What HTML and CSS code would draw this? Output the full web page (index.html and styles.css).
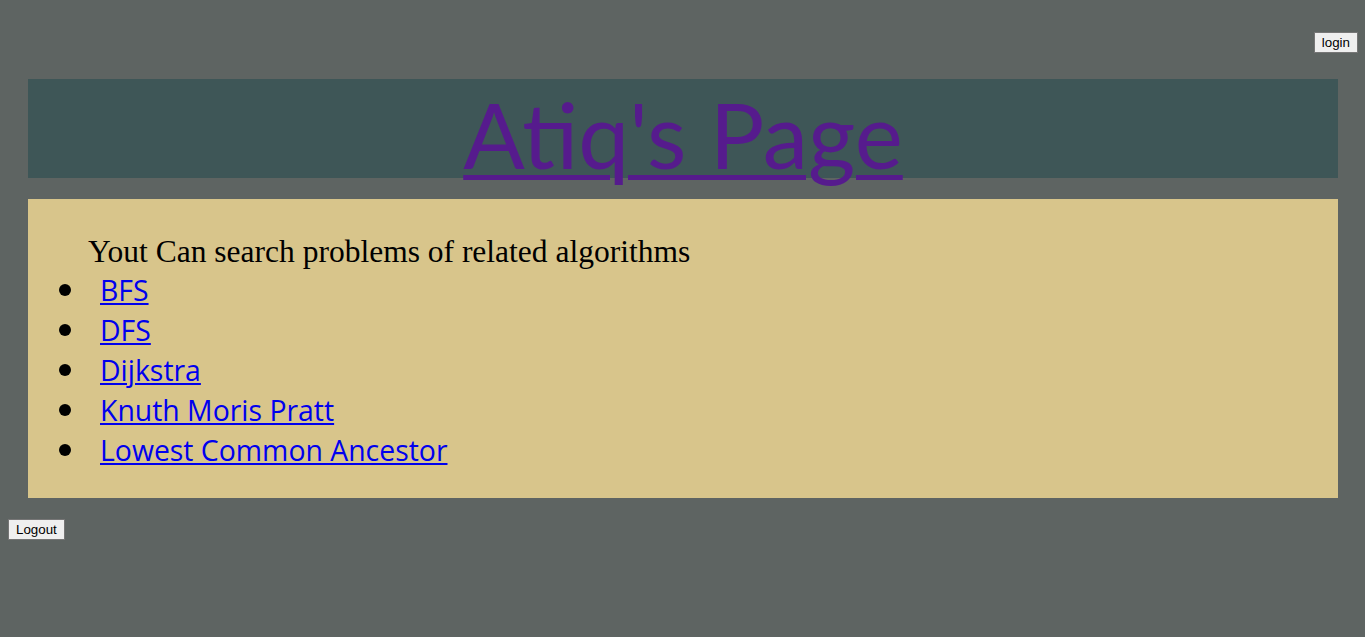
FILE: index.html
```html
<!DOCTYPE html>
<html>
<head>
<meta charset="utf-8">
<link rel="stylesheet" href="styles.css">
</head>
<body>
<div class="topbar"><button class="btn">login</button></div>
<header class="banner"><a class="title" href="#">Atiq's Page</a></header>
<section class="content">
  <p class="intro">Yout Can search problems of related algorithms</p>
  <ul class="algos">
    <li><a href="#">BFS</a></li>
    <li><a href="#">DFS</a></li>
    <li><a href="#">Dijkstra</a></li>
    <li><a href="#">Knuth Moris Pratt</a></li>
    <li><a href="#">Lowest Common Ancestor</a></li>
  </ul>
</section>
<div class="bottombar"><button class="btn">Logout</button></div>
</body>
</html>
```
FILE: styles.css
```css
html, body { margin: 0; }
body {
  background: #5e6462;
  padding: 8px 8px 8px 8px;
  font-family: "Liberation Sans", Arial, sans-serif;
}
.topbar {
  display: flex;
  justify-content: flex-end;
  margin-top: 24px;
}
.btn {
  font-family: "Liberation Sans", Arial, sans-serif;
  font-size: 13.33px;
  height: 21px;
  padding: 1px 7px;
  background: #efefef;
  border: 1px solid #767676;
  border-radius: 0;
  color: #000;
}
.topbar .btn { margin-right: -1px; }
.banner {
  margin: 26px 19px 0 20px;
  height: 99px;
  background: #3e5657;
  display: flex;
  justify-content: center;
}
.title {
  font-family: "Lato", sans-serif;
  font-size: 91px;
  line-height: 1;
  color: #561b8d;
  margin-top: 9px;
  white-space: nowrap;
  text-decoration-thickness: 5px;
  text-underline-offset: 6px;
}
.content {
  margin: 21px 19px 0 20px;
  height: 299px;
  box-sizing: border-box;
  background: #d8c58b;
  padding: 33px 0 0 60px;
}
.intro {
  margin: 0;
  font-family: "Liberation Serif", serif;
  font-size: 31.5px;
  line-height: 40px;
  color: #000;
}
.algos {
  margin: -2px 0 0;
  padding: 0 0 0 12px;
  list-style: none;
  font-family: "Open Sans", sans-serif;
  font-size: 28.4px;
  line-height: 40px;
}
.algos li {
  display: flex;
  align-items: center;
}
.algos li::before {
  content: "";
  width: 12px;
  height: 12px;
  border-radius: 50%;
  background: #000;
  margin-left: -41px;
  margin-right: 29px;
}
.algos a { color: #0000ee; }
.bottombar {
  display: flex;
  margin-top: 21px;
}
```
